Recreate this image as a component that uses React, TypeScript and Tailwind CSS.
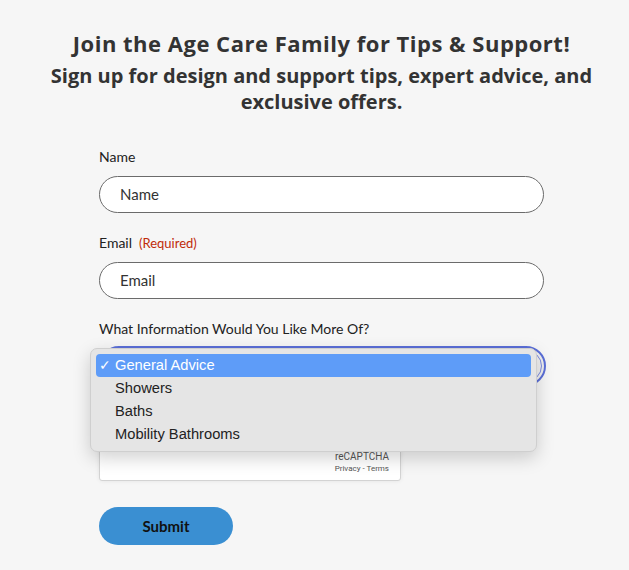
// Newsletter sign-up form with the native select menu shown open.
const OPTIONS = ["General Advice", "Showers", "Baths", "Mobility Bathrooms"];

function Field({ label, placeholder, required }: { label: string; placeholder: string; required?: boolean }) {
  return (
    <div>
      <label className="block text-[14px] leading-[20px] text-[#222]">
        {label}
        {required && <span className="ml-[7px] text-[13px] text-[#c02b0a]">(Required)</span>}
      </label>
      <div className="mt-[9px] flex h-[37px] items-center rounded-full border border-[#6b6b6b] bg-white px-[20px] text-[15px] text-[#333]">
        {placeholder}
      </div>
    </div>
  );
}

export default function App() {
  return (
    <div className="min-h-[570px] bg-[#f6f6f6] pl-[14px] pt-[27px] text-center font-['Lato',sans-serif] text-[#333]">
      <div className="font-['Open_Sans',sans-serif] font-bold text-[#333]">
        <h1 className="text-[22px] leading-[32px] tracking-[0.5px]">Join the Age Care Family for Tips &amp; Support!</h1>
        <p className="mt-[4px] text-[20px] leading-[26px]">
          Sign up for design and support tips, expert advice, and
          <br />
          exclusive offers.
        </p>
      </div>

      <form className="mx-auto mt-[32px] w-[445px] text-left">
        <Field label="Name" placeholder="Name" />
        <div className="mt-[20px]">
          <Field label="Email" placeholder="Email" required />
        </div>

        <div className="relative mt-[20px]">
          <label className="block text-[14px] leading-[20px] text-[#222]">What Information Would You Like More Of?</label>
          <div className="mt-[7px] h-[40px] w-[447px] rounded-full border-2 border-[#5b6fd8] bg-[#f0f0f0] p-[2px]">
            <div className="h-full w-full rounded-full border border-[#7c8be0]" />
          </div>

          {/* open option list */}
          <div className="absolute left-[-9px] top-[29px] z-10 w-[447px] rounded-[7px] border border-[#cfcfcf] bg-[#e5e5e5] p-[5px] font-['Liberation_Sans',sans-serif] text-[14.7px] text-[#222] shadow-[0_6px_18px_rgba(0,0,0,0.18)]">
            {OPTIONS.map((o, i) => (
              <div
                key={o}
                className={
                  "flex h-[23px] items-center rounded-[4px] pl-[3px] " +
                  (i === 0 ? "bg-[#5e9cf8] text-white" : "")
                }
              >
                <span className="w-[16px] text-[14px]">{i === 0 && "✓"}</span>
                {o}
              </div>
            ))}
          </div>

          <div className="mt-[17px] flex h-[78px] w-[302px] flex-col items-end justify-end rounded-[3px] border border-[#d3d3d3] bg-white pb-[6px] pr-[11px] font-['Roboto',sans-serif] text-[#555] shadow-[0_0_4px_rgba(0,0,0,0.08)]">
            <span className="text-[10px] leading-[12px]">reCAPTCHA</span>
            <span className="mt-[1px] text-[8px] leading-[10px]">Privacy - Terms</span>
          </div>
        </div>

        <button
          type="button"
          className="mt-[26px] h-[38px] w-[134px] rounded-full bg-[#3a8fd2] text-[15px] font-bold text-[#111]"
        >
          Submit
        </button>
      </form>
    </div>
  );
}
